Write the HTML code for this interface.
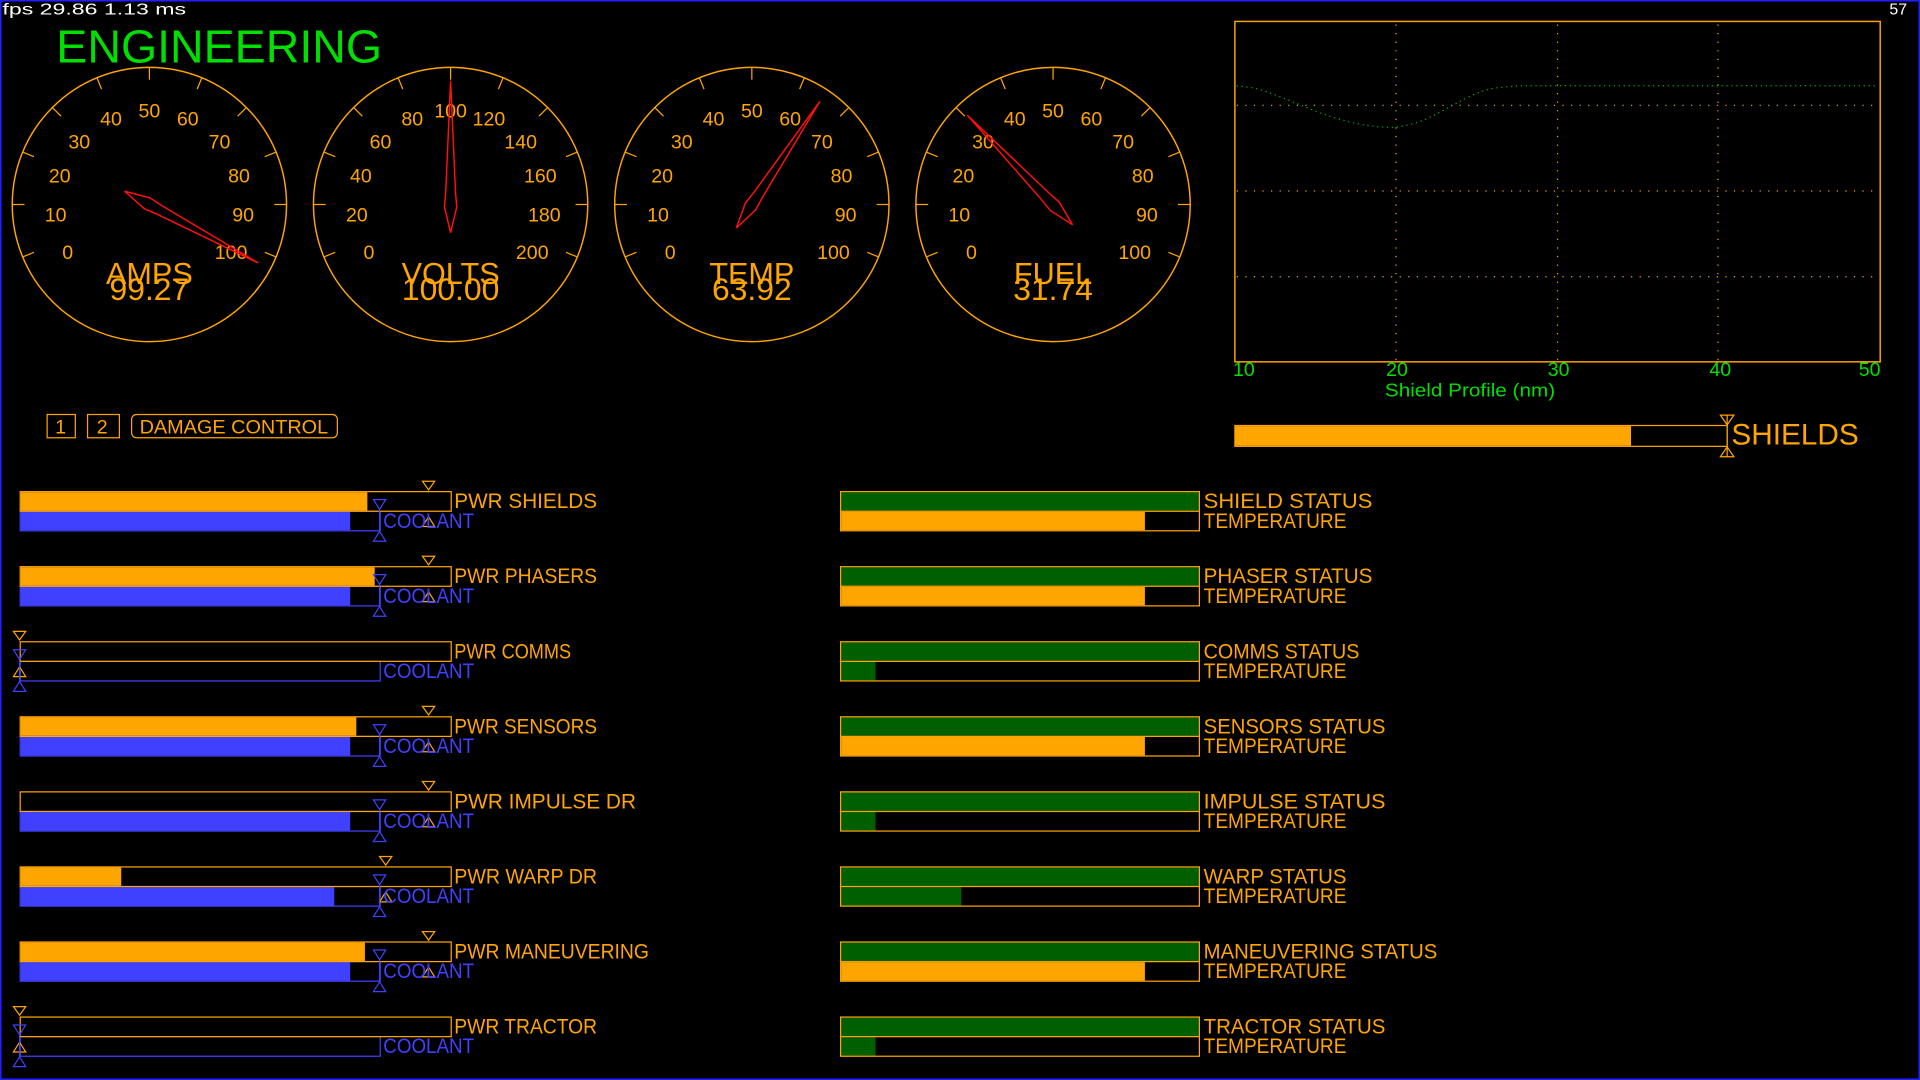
<!DOCTYPE html>
<html><head><meta charset="utf-8"><style>
html,body{margin:0;padding:0;background:#000;overflow:hidden;width:1920px;height:1080px}
svg{display:block}
text{font-family:"Liberation Sans",sans-serif}
</style></head><body>
<svg id="s" width="1920" height="1080" viewBox="0 0 1568 882" preserveAspectRatio="none" xmlns="http://www.w3.org/2000/svg">
<rect x="0.5" y="0.5" width="1567" height="881" fill="#000" stroke="#2020ff" stroke-width="1.5"/>
<text x="2" y="12" fill="#fff" font-size="13" textLength="150" lengthAdjust="spacingAndGlyphs">fps  29.86 1.13  ms</text>
<text x="1543" y="12" fill="#fff" font-size="13">57</text>
<text x="46" y="51" fill="#00e000" font-size="38" textLength="266" lengthAdjust="spacingAndGlyphs" font-weight="normal">ENGINEERING</text>
<g id="gauges"></g>
<rect x="1008.5" y="17.5" width="527" height="278" fill="none" stroke="#ffa500" stroke-width="1.2"/>
<g stroke="#ffa500" stroke-width="1" stroke-dasharray="1 6">
<line x1="1140" y1="20" x2="1140" y2="294"/><line x1="1272" y1="20" x2="1272" y2="294"/><line x1="1403" y1="20" x2="1403" y2="294"/>
<line x1="1010" y1="86" x2="1534" y2="86"/><line x1="1010" y1="156" x2="1534" y2="156"/><line x1="1010" y1="226" x2="1534" y2="226"/>
</g>
<path d="M1010 70 L1025 72 C1060 82 1090 103 1135 104 C1170 103 1190 78 1220 72 L1240 70 L1534 70" fill="none" stroke="#00b000" stroke-width="1" stroke-dasharray="1 3"/>
<g fill="#00e000" font-size="16">
<text x="1007" y="307">10</text><text x="1132" y="307">20</text><text x="1264" y="307">30</text><text x="1396" y="307">40</text><text x="1518" y="307">50</text>
<text x="1131" y="324" font-size="15" textLength="139" lengthAdjust="spacingAndGlyphs">Shield  Profile  (nm)</text>
</g>
<rect x="1008.5" y="347.5" width="402" height="17" fill="none" stroke="#ffa500"/>
<rect x="1009" y="348" width="323" height="16" fill="#ffa500"/>
<path d="M1405 339 L1416 339 L1410.5 347 Z M1405 373 L1416 373 L1410.5 365 Z" fill="none" stroke="#ffa500"/>
<line x1="1410.5" y1="339" x2="1410.5" y2="373" stroke="#ffa500"/>
<text x="1414" y="363" fill="#ffa500" font-size="24" textLength="104" lengthAdjust="spacingAndGlyphs">SHIELDS</text>
<g fill="none" stroke="#ffa500">
<rect x="38.5" y="338.5" width="23" height="19"/>
<rect x="71.5" y="338.5" width="26" height="19"/>
<rect x="107.5" y="338.5" width="168" height="19" rx="4"/>
</g>
<g fill="#ffa500" font-size="16">
<text x="45" y="354">1</text><text x="79" y="354">2</text>
<text x="114" y="354" textLength="154" lengthAdjust="spacingAndGlyphs">DAMAGE  CONTROL</text>
</g>
<g id="rows"></g>
</svg>
<script>
const NS="http://www.w3.org/2000/svg";
function el(p,t,a,txt){const e=document.createElementNS(NS,t);for(const k in a)e.setAttribute(k,a[k]);if(txt!=null)e.textContent=txt;p.appendChild(e);return e;}
function tx(p,x,y,fill,s,size){return el(p,'text',{x:x,y:y,fill:fill,'font-size':size||17,textLength:(s.length*10.6).toFixed(1),lengthAdjust:'spacingAndGlyphs'},s);}
const G=document.getElementById('gauges');
const gauges=[
 {cx:122,max:100,step:10,val:99.27,title:"AMPS",txt:"99.27"},
 {cx:368,max:200,step:20,val:100,title:"VOLTS",txt:"100.00"},
 {cx:614,max:100,step:10,val:63.92,title:"TEMP",txt:"63.92"},
 {cx:860,max:100,step:10,val:31.74,title:"FUEL",txt:"31.74"}];
const cy=167,R=112;
for(const g of gauges){
 el(G,'circle',{cx:g.cx,cy:cy,r:R,fill:'none',stroke:'#ffa500','stroke-width':1.2});
 for(let i=-5;i<=5;i++){const a=i*22.5*Math.PI/180;const s=Math.sin(a),c=-Math.cos(a);
  el(G,'line',{x1:g.cx+s*R,y1:cy+c*R,x2:g.cx+s*(R-10),y2:cy+c*(R-10),stroke:'#ffa500','stroke-width':1});}
 for(let i=0;i<=10;i++){const a=(-120+24*i)*Math.PI/180;const s=Math.sin(a),c=-Math.cos(a);
  el(G,'text',{x:g.cx+s*77,y:cy+c*77+6,fill:'#ffa500','font-size':16,'text-anchor':'middle'},String(i*g.step));}
 el(G,'text',{x:g.cx,y:232,fill:'#ffa500','font-size':25,'text-anchor':'middle'},g.title);
 el(G,'text',{x:g.cx,y:245,fill:'#ffa500','font-size':26,'text-anchor':'middle'},g.txt);
 const ang=-120+240*g.val/g.max;
 el(G,'polygon',{points:"0,23 -5,2 -4,-10 0,-101 4,-10 5,2",fill:'none',stroke:'#ff1010','stroke-width':1.2,transform:`translate(${g.cx},${cy}) rotate(${ang})`});
}
const RW=document.getElementById('rows');
const rows=[
 ["SHIELDS","SHIELD STATUS",300,286,350,310,'o',935],
 ["PHASERS","PHASER STATUS",306,286,350,310,'o',935],
 ["COMMS","COMMS STATUS",16,16,16,16,'g',715],
 ["SENSORS","SENSORS STATUS",291,286,350,310,'o',935],
 ["IMPULSE DR","IMPULSE STATUS",16,286,350,310,'g',715],
 ["WARP DR","WARP STATUS",99,273,315,310,'g',785],
 ["MANEUVERING","MANEUVERING STATUS",298,286,350,310,'o',935],
 ["TRACTOR","TRACTOR STATUS",16,16,16,16,'g',715]];
const O='#ffa500',B='#4040ff',GR='#006000';
rows.forEach((r,i)=>{
 const y=401+i*61.3;
 if(r[2]>17)el(RW,'rect',{x:17,y:y+1,width:r[2]-17,height:15,fill:O});
 if(r[3]>17)el(RW,'rect',{x:17,y:y+17,width:r[3]-17,height:15,fill:B});
 el(RW,'rect',{x:16.5,y:y+16.5,width:294,height:16,fill:'none',stroke:B});
 el(RW,'rect',{x:16.5,y:y+0.5,width:352,height:16,fill:'none',stroke:O});
 const m=r[4],c=r[5];
 el(RW,'path',{d:`M${m-5} ${y-8}L${m+5} ${y-8}L${m} ${y-1}Z M${m-5} ${y+29}L${m+5} ${y+29}L${m} ${y+21}Z`,fill:'none',stroke:O});
 el(RW,'path',{d:`M${c-5} ${y+7}L${c+5} ${y+7}L${c} ${y+15}Z M${c-5} ${y+41}L${c+5} ${y+41}L${c} ${y+33}Z`,fill:'none',stroke:B});
 el(RW,'line',{x1:c,y1:y+15,x2:c,y2:y+33,stroke:B});
 tx(RW,371,y+14,O,"PWR "+r[0]);
 tx(RW,313,y+30,B,"COOLANT");
 el(RW,'rect',{x:687,y:y+1,width:292,height:15,fill:GR});
 el(RW,'rect',{x:687,y:y+17,width:r[7]-687,height:15,fill:r[6]=='o'?O:GR});
 el(RW,'rect',{x:686.5,y:y+0.5,width:293,height:32,fill:'none',stroke:O});
 el(RW,'line',{x1:686,y1:y+16.5,x2:980,y2:y+16.5,stroke:O});
 tx(RW,983,y+14,O,r[1]);
 tx(RW,983,y+30,O,"TEMPERATURE");
});
</script>
</body></html>
